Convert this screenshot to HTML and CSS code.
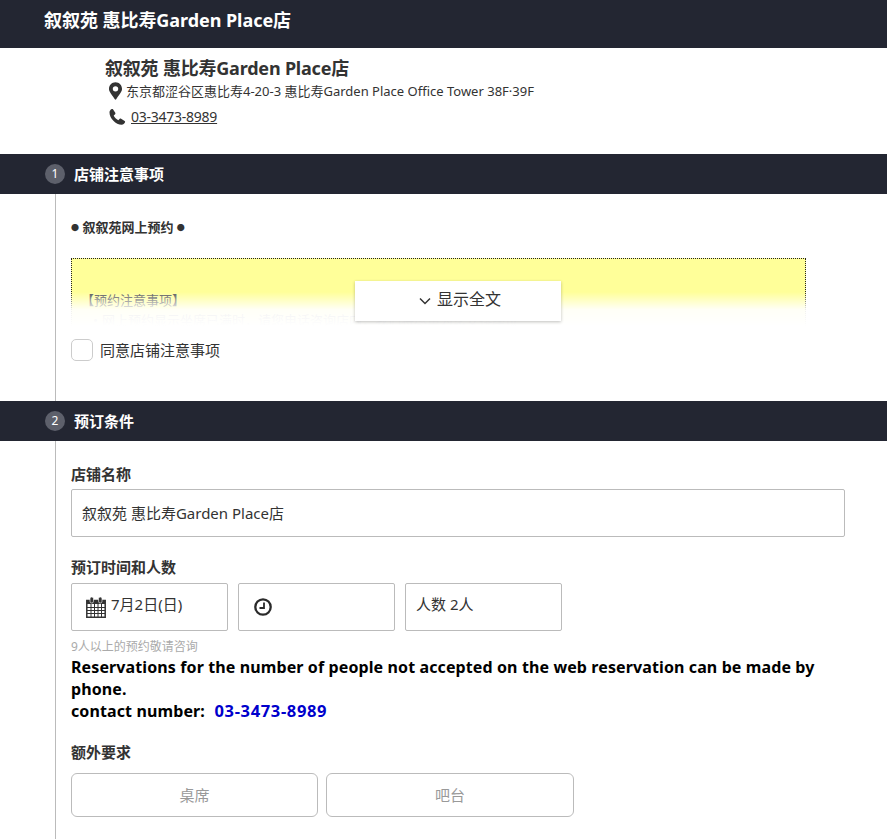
FILE: index.html
```html
<!DOCTYPE html>
<html lang="zh-CN">

<head>
    <meta charset="UTF-8">
    <title>叙叙苑 惠比寿Garden Place店</title>
    <link rel="stylesheet" href="styles.css">
</head>

<body>
    <header class="top-bar">叙叙苑 惠比寿Garden Place店</header>

    <div class="shop">
        <h1 class="shop-name">叙叙苑 惠比寿Garden Place店</h1>
        <p class="shop-address">
            <svg class="icon-pin" viewBox="0 0 384 512" width="13" height="18"><path fill-rule="evenodd" d="M172 502C27 291 0 266 0 192 0 86 86 0 192 0s192 86 192 192c0 74-27 99-172 310-10 14-30 14-40 0zM192 272a80 80 0 1 0 0-160 80 80 0 0 0 0 160z"/></svg>
            东京都涩谷区惠比寿4-20-3 惠比寿Garden Place Office Tower 38F·39F
        </p>
        <p class="shop-phone">
            <svg class="icon-phone" viewBox="0 0 24 24" width="18" height="18"><path d="M6.600 1.600 9.700 6.400c.4.600.3 1.300-.2 1.800L7.600 10c1.200 2.700 3.400 5 6.200 6.300l1.800-1.900c.5-.5 1.300-.6 1.900-.2l4.700 3c.6.4.8 1.100.5 1.700-.9 2-2.400 3.300-4.500 3.300C10.500 22.200 2 13.700 2 5.900c0-2 1.200-3.600 3-4.500.6-.2 1.200-.1 1.600.2z"/></svg>
            <a href="#">03-3473-8989</a>
        </p>
    </div>

    <h2 class="step-bar"><span class="step-num">1</span>店铺注意事项</h2>
    <section class="step step-notice">
        <p class="notice-title"><span class="dot">●</span> 叙叙苑网上预约 <span class="dot">●</span></p>
        <div class="notice-wrap">
            <div class="notice-box">
                <p>【预约注意事项】</p>
                <p class="notice-line">・网上预约显示坐席已满时，请您电话咨询店内，我们将尽量为您安排座位</p>
            </div>
            <div class="notice-fade"></div>
            <button class="notice-more">
                <svg viewBox="0 0 12 8" width="12" height="8"><path d="M1 1.500l5 5 5-5" fill="none" stroke="#333" stroke-width="1.500"/></svg>
                <span class="notice-more-text">显示全文</span>
            </button>
        </div>
        <label class="agree"><span class="agree-box"></span>同意店铺注意事项</label>
    </section>

    <h2 class="step-bar"><span class="step-num">2</span>预订条件</h2>
    <section class="step step-form">
        <div class="field">
            <p class="field-label">店铺名称</p>
            <div class="input input-wide">叙叙苑 惠比寿Garden Place店</div>
        </div>
        <div class="field">
            <p class="field-label">预订时间和人数</p>
            <div class="input-row">
                <div class="input input-third input-date">
                    <svg viewBox="0 0 20 22" width="20" height="22">
                        <path d="M.8 4.500h18.400v16.700H.8z" fill="none" stroke="#333" stroke-width="1.500"/>
                        <path d="M.8 4h18.400v4H.8z" fill="#333"/>
                        <path d="M1 11.500h18M1 14.500h18M1 17.500h18M5 8v13M8.500 8v13M12 8v13M15.500 8v13" stroke="#333" stroke-width="1"/>
                        <rect x="4" y="1" width="3.500" height="6" rx="1.700" fill="#333" stroke="#fff" stroke-width=".6"/>
                        <rect x="12.500" y="1" width="3.500" height="6" rx="1.700" fill="#333" stroke="#fff" stroke-width=".6"/>
                    </svg>
                    <span class="input-text">7月2日(日)</span>
                </div>
                <div class="input input-third input-time">
                    <svg viewBox="0 0 18 18" width="18" height="18">
                        <circle cx="9" cy="9" r="7.700" fill="none" stroke="#2a2a2a" stroke-width="2.300"/>
                        <path d="M10 4.500V10H5.500" fill="none" stroke="#2a2a2a" stroke-width="1.800"/>
                    </svg>
                </div>
                <div class="input input-third input-people">人数 2人</div>
            </div>
            <p class="hint">9人以上的预约敬请咨询</p>
            <p class="phone-note">Reservations for the number of people not accepted on the web reservation can be made by phone.<br>contact number:&nbsp; <span class="phone-blue">03-3473-8989</span></p>
        </div>
        <div class="field">
            <p class="field-label">额外要求</p>
            <div class="seat-row">
                <button class="seat">桌席</button>
                <button class="seat">吧台</button>
            </div>
        </div>
    </section>
</body>

</html>
```

FILE: styles.css
```css
* {
    box-sizing: border-box;
}

html,
body {
    height: 100%;
    overflow: hidden;
}

body {
    margin: 0;
    font-family: "Noto Sans", "Noto Sans CJK SC", sans-serif;
    font-size: 15px;
    color: #333;
    background: #fff;
}

p,
h1,
h2 {
    margin: 0;
}

.top-bar {
    height: 48px;
    padding: 7px 0 0 44px;
    background: #232632;
    color: #fff;
    font-size: 18px;
    line-height: 26px;
    font-weight: 700;
    letter-spacing: -0.05px;
}

.shop {
    height: 106px;
    padding: 8px 0 0 105px;
}

.shop-name {
    font-size: 18px;
    line-height: 24px;
    font-weight: 700;
    letter-spacing: -0.2px;
}

.shop-address {
    display: flex;
    align-items: center;
    gap: 4px;
    padding-left: 4px;
    font-size: 13px;
    line-height: 22px;
}

.icon-pin,
.icon-phone {
    fill: #333;
    flex: none;
}

.shop-phone {
    display: flex;
    align-items: center;
    gap: 5px;
    margin-top: 4px;
    padding-left: 3px;
    font-size: 14px;
    line-height: 22px;
    letter-spacing: -0.25px;
}

.shop-phone a {
    color: #333;
}

.step-bar {
    display: flex;
    align-items: center;
    height: 40px;
    padding: 0 0 1px 45px;
    background: #232632;
    color: #fff;
    font-size: 15px;
    font-weight: 700;
}

.step-num {
    width: 20px;
    height: 20px;
    margin-right: 9px;
    border-radius: 50%;
    background: #5d606b;
    font-size: 12px;
    font-weight: 400;
    line-height: 20px;
    text-align: center;
}

.step {
    margin-left: 55px;
    padding-left: 15px;
    border-left: 1px solid #bbb;
}

.step-notice {
    height: 207px;
    padding-top: 23px;
}

.notice-title {
    height: 20px;
    font-size: 13px;
    line-height: 20px;
    font-weight: 700;
}

.dot {
    font-size: 8px;
    line-height: 1;
    vertical-align: 1px;
}

.notice-wrap {
    position: relative;
    width: 735px;
    height: 68px;
    margin-top: 21px;
    overflow: hidden;
}

.notice-box {
    height: 120px;
    padding: 31px 2px 0 9px;
    border: 1px dotted #222;
    background: #ffff99;
    font-size: 13px;
    line-height: 20px;
    color: #555;
}

.notice-line {
    padding-left: 8px;
    white-space: nowrap;
}

.notice-fade {
    position: absolute;
    inset: 0;
    background: linear-gradient(to bottom, rgba(255, 255, 255, 0) 50%, rgba(255, 255, 255, 0.92) 76%, #fff 100%);
}

.notice-more {
    position: absolute;
    left: 284px;
    top: 23px;
    display: flex;
    align-items: center;
    justify-content: center;
    gap: 6px;
    width: 206px;
    height: 40px;
    padding: 0 0 0 4px;
    border: 0;
    background: #fff;
    box-shadow: 0 1px 3px rgba(0, 0, 0, 0.25);
    font: inherit;
    font-size: 16px;
    color: #333;
}

.notice-more-text {
    padding-bottom: 7px;
}

.agree {
    display: flex;
    align-items: center;
    margin-top: 13px;
    line-height: 22px;
}

.agree-box {
    width: 22px;
    height: 22px;
    margin-right: 7px;
    border: 1px solid #ccc;
    border-radius: 5px;
}

.step-form {
    padding-top: 23px;
    height: 398px;
}

.field-label {
    font-size: 15px;
    line-height: 20px;
    font-weight: 700;
}

.input {
    height: 48px;
    margin-top: 5px;
    border: 1px solid #bbb;
    border-radius: 2px;
    padding: 0 10px;
    line-height: 46px;
}

.input-wide {
    width: 774px;
}

.field + .field {
    margin-top: 20px;
}

.input-row {
    display: flex;
    gap: 10px;
    margin-top: 6px;
}

.input-row .input {
    margin-top: 0;
}

.input-third {
    width: 157px;
}

.input-date {
    display: flex;
    align-items: center;
    gap: 5px;
    padding-left: 14px;
    line-height: 1;
}

.input-text {
    padding-bottom: 5px;
}

.input-time {
    display: flex;
    align-items: center;
    padding-left: 15px;
}

.input-people {
    line-height: 41px;
}

.hint {
    margin-top: 8px;
    font-size: 12px;
    line-height: 16px;
    color: #aaa;
}

.phone-note {
    width: 774px;
    margin-top: 1px;
    font-size: 16px;
    line-height: 22px;
    font-weight: 700;
    color: #000;
    letter-spacing: 0.11px;
}

.phone-blue {
    margin-left: 1px;
    font-size: 16.500px;
    letter-spacing: 0.650px;
    color: #0000cc;
}

.seat-row {
    display: grid;
    grid-template-columns: 247px 248px;
    gap: 8px;
    margin-top: 11px;
}

.seat {
    height: 44px;
    padding: 0 0 2px;
    border: 1px solid #bbb;
    border-radius: 6px;
    background: #fff;
    font: inherit;
    color: #999;
}
```
